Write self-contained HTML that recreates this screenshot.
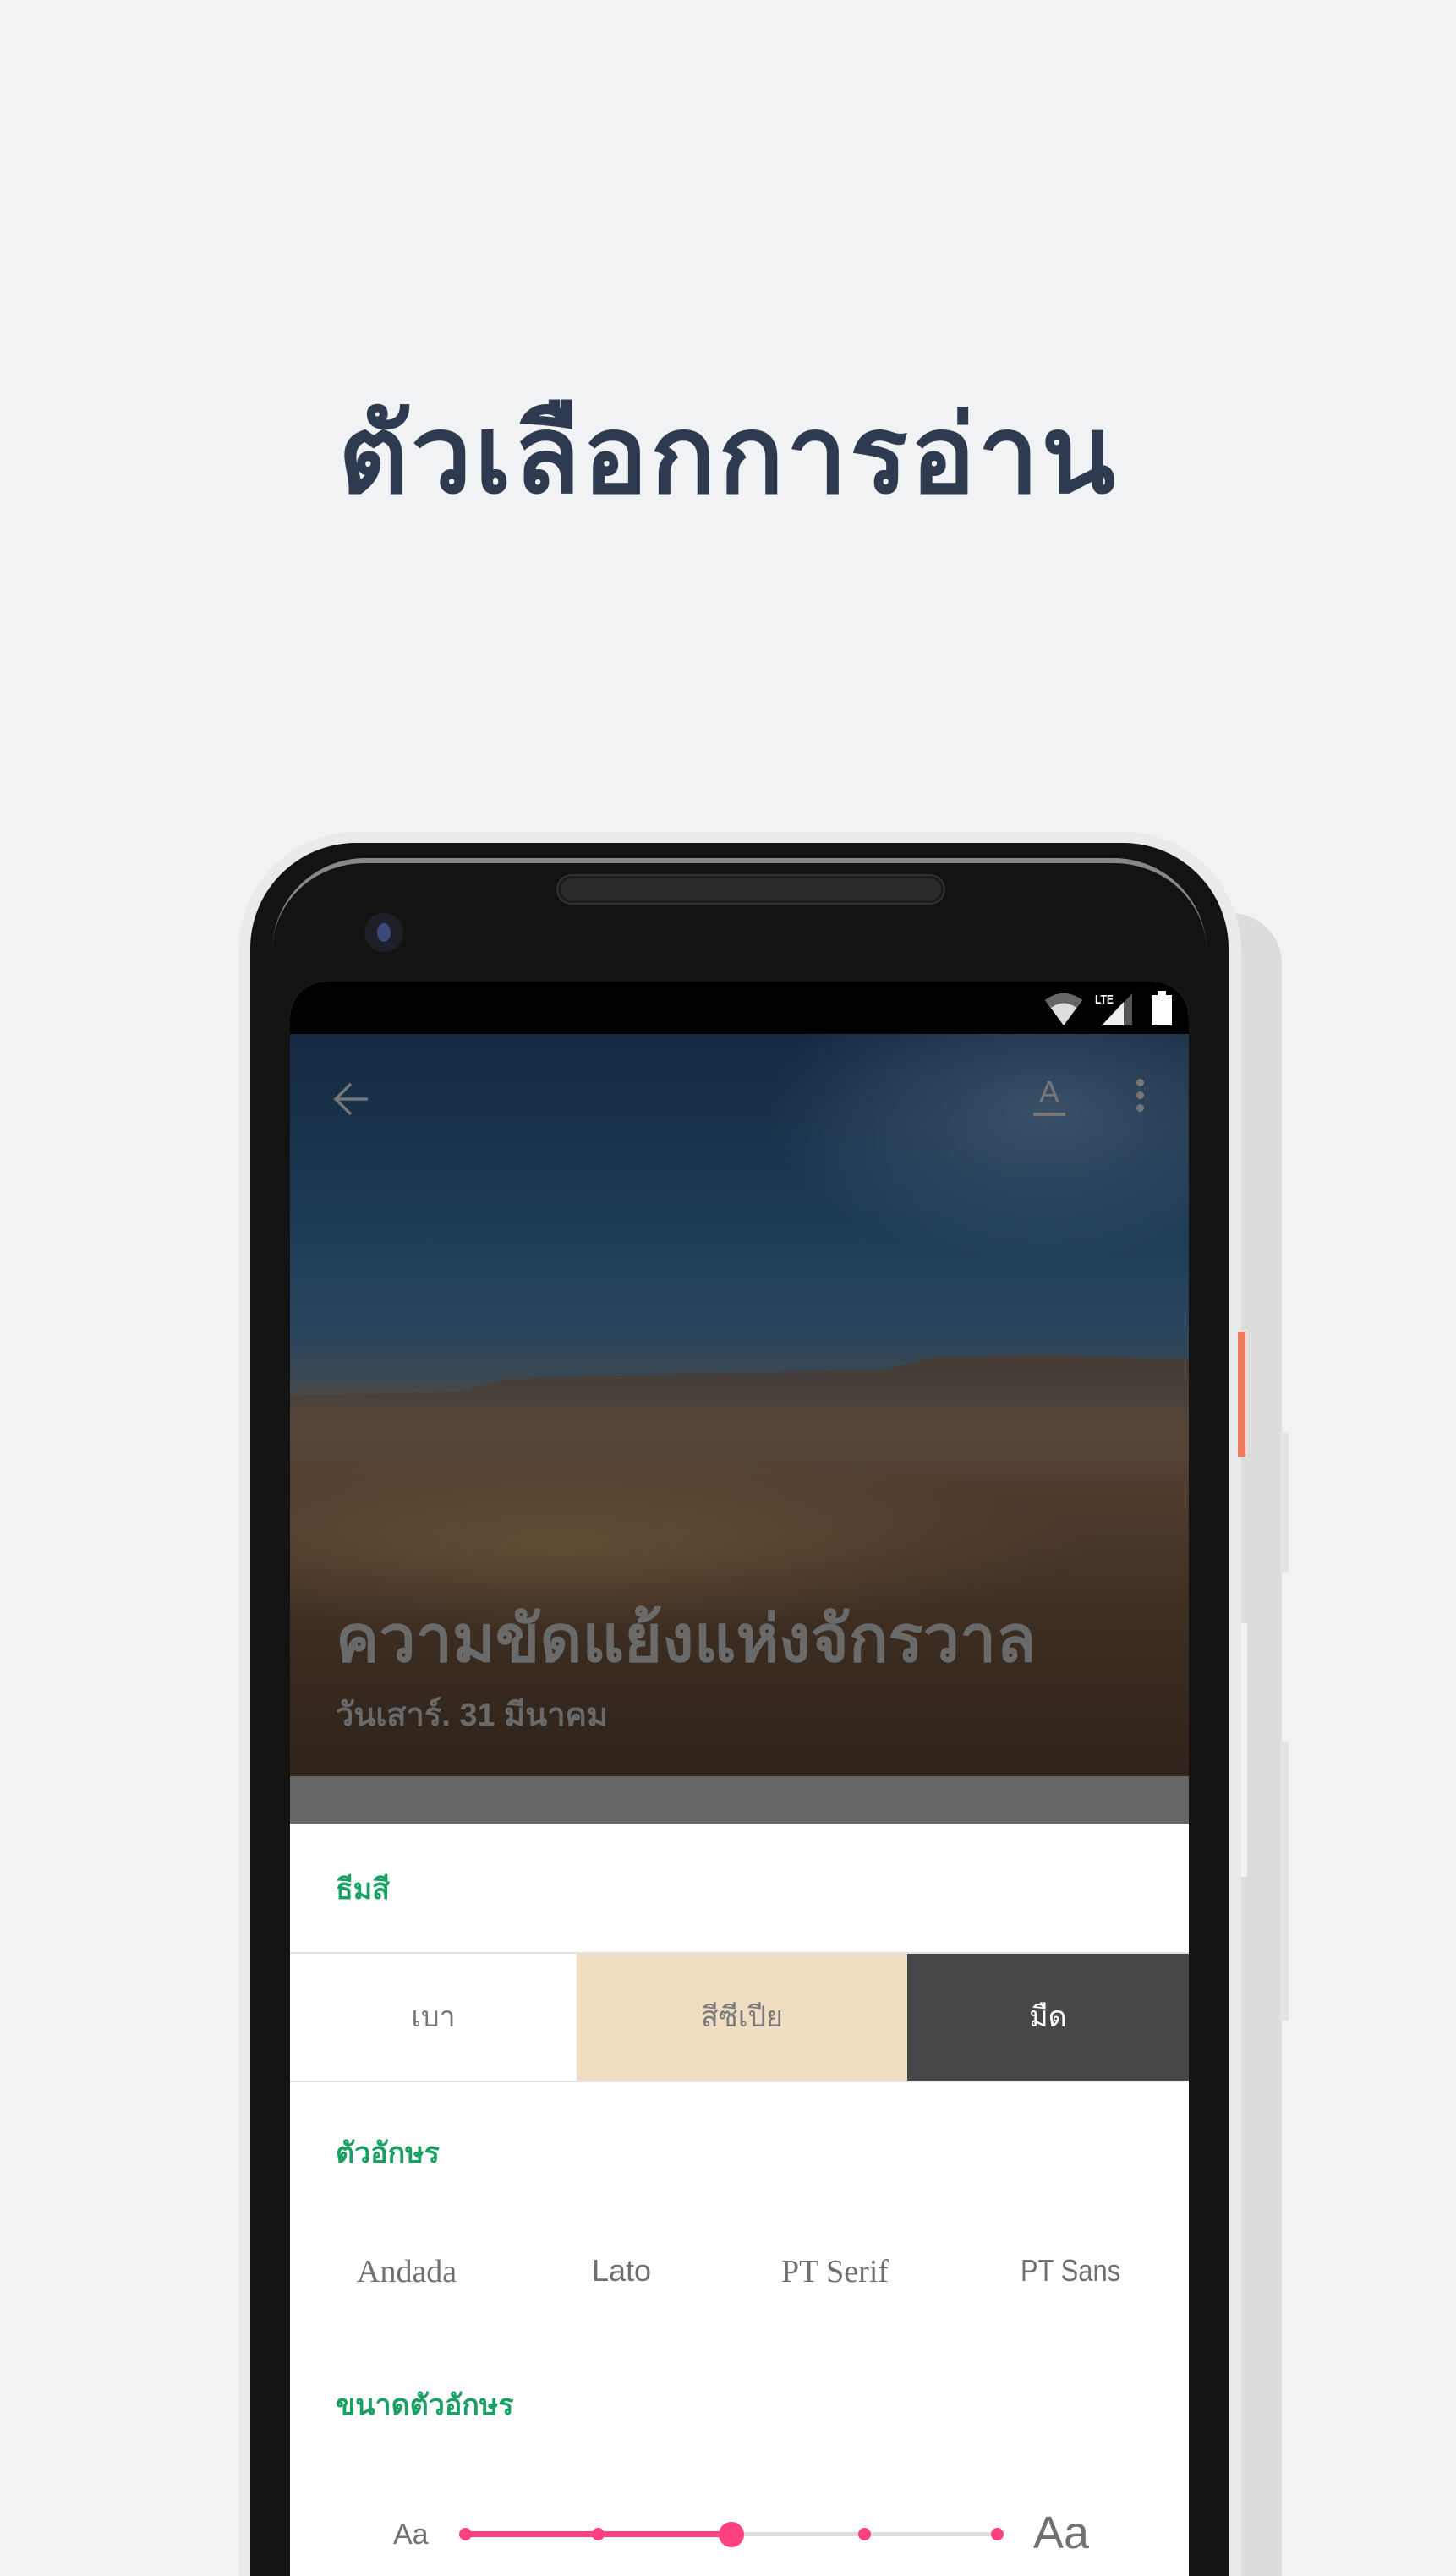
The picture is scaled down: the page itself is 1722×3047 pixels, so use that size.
<!DOCTYPE html>
<html><head><meta charset="utf-8"><style>
*{margin:0;padding:0;box-sizing:border-box}
html,body{width:1722px;height:3047px;overflow:hidden}
body{background:#f0f2f4;position:relative;font-family:"Liberation Sans",sans-serif}
.abs{position:absolute}
h1{position:absolute;left:0;width:1722px;top:436px;text-align:center;font-size:128px;font-weight:bold;color:#2d3a50;letter-spacing:3px;white-space:nowrap}
.g{color:#1aa062;font-weight:bold;font-size:34px}
</style></head><body>
<h1>ตัวเลือกการอ่าน</h1>
<div class="abs" style="left:1400px;top:1080px;width:116px;height:1967px;background:#dcdcdc;border-radius:0 60px 0 0"></div>
<div class="abs" style="left:1514px;top:1695px;width:10px;height:165px;background:#e4e4e4"></div>
<div class="abs" style="left:1514px;top:2060px;width:10px;height:330px;background:#e4e4e4"></div>
<div class="abs" style="left:1465px;top:1920px;width:10px;height:300px;background:#f4f4f4"></div>
<div class="abs" style="left:282px;top:984px;width:1186px;height:2063px;background:#e9eaeb;border-radius:140px 140px 0 0"></div>
<div class="abs" style="left:1464px;top:1575px;width:9px;height:148px;background:#f07a5e"></div>
<div class="abs" style="left:296px;top:997px;width:1157px;height:2050px;background:#131313;border-radius:125px 125px 0 0"></div>
<div class="abs" style="left:322px;top:1015px;width:1105px;height:200px;border-top:6px solid #888;border-radius:110px 110px 0 0"></div>
<div class="abs" style="left:322px;top:1022px;width:1105px;height:200px;border-top:4px solid #131313;border-radius:110px 110px 0 0"></div>
<div class="abs" style="left:660px;top:1036px;width:456px;height:32px;background:#2a2a2a;border:3px solid #1c1c1c;border-radius:16px;box-shadow:0 0 0 2px #333"></div>
<div class="abs" style="left:431px;top:1080px;width:46px;height:46px;border-radius:50%;background:#1d2028"></div>
<div class="abs" style="left:446px;top:1092px;width:16px;height:22px;border-radius:50%;background:#3a4a7a"></div>
<div class="abs" style="left:343px;top:1161px;width:1063px;height:1886px;background:#fff;border-radius:42px 42px 0 0;overflow:hidden">
 <div class="abs" style="left:0;top:0;width:1063px;height:62px;background:#000"></div>
 <svg class="abs" style="left:890px;top:10px" width="160" height="44" viewBox="0 0 160 44">
  <path d="M3 12 Q25 -4 47 12 L25 42 Z" fill="#ddd"/><path d="M3 12 Q25 -4 47 12 L40 21 Q25 10 10 21Z" fill="#666"/>
  <text x="62" y="16" font-size="15" fill="#fff" font-family="Liberation Sans" font-weight="bold" textLength="22" lengthAdjust="spacingAndGlyphs">LTE</text>
  <path d="M70 42 L106 42 L106 4 Z" fill="#555"/><path d="M70 42 L96 42 L96 14 Z" fill="#eee"/>
  <rect x="129" y="6" width="24" height="36" fill="#fff"/><rect x="136" y="1" width="10" height="6" fill="#fff"/>
 </svg>
 <div class="abs" style="left:0;top:62px;width:1063px;height:878px;background:linear-gradient(180deg,#142a40 0%,#1d3a55 25%,#2a465e 40%,#3a4752 46%,#5a4a3c 52%,#4e3b2c 62%,#3e2e22 78%,#2e231b 100%)"></div>
 <div class="abs" style="left:500px;top:62px;width:563px;height:300px;background:radial-gradient(ellipse at 70% 30%,rgba(120,140,160,.35),rgba(0,0,0,0) 60%)"></div>
 <svg class="abs" style="left:0;top:440px" width="1063" height="120" viewBox="0 0 1063 120"><defs><linearGradient id="r" x1="0" y1="0" x2="0" y2="1"><stop offset="0" stop-color="#4a3a2e" stop-opacity=".9"/><stop offset="1" stop-color="#4a3a2e" stop-opacity="0"/></linearGradient></defs><path d="M0 50 L200 45 L260 30 L420 25 L560 22 L700 20 L760 5 L900 2 L1063 8 L1063 120 L0 120Z" fill="url(#r)"/></svg>
 <div class="abs" style="left:0;top:540px;width:1063px;height:250px;background:radial-gradient(ellipse at 30% 50%,rgba(130,105,70,.45),rgba(0,0,0,0) 60%)"></div>
 <svg class="abs" style="left:50px;top:116px" width="46" height="46" viewBox="0 0 46 46"><path d="M42 23H6M22 5L4 23 22 41" stroke="#777" stroke-width="3.5" fill="none"/></svg>
 <div class="abs" style="left:879px;top:110px;width:38px;font:36px 'Liberation Sans';color:#777;text-align:center">A</div>
 <div class="abs" style="left:879px;top:155px;width:38px;height:4px;background:#777"></div>
 <div class="abs" style="left:1001px;top:115px;width:9px;height:9px;border-radius:50%;background:#777;box-shadow:0 15px 0 #777,0 30px 0 #777"></div>
 <div class="abs" style="left:54px;top:716px;font-size:77px;font-weight:bold;color:#6a6a6a;white-space:nowrap">ความขัดแย้งแห่งจักรวาล</div>
 <div class="abs" style="left:54px;top:836px;font-size:38px;font-weight:bold;color:#6a6a6a;white-space:nowrap">วันเสาร์. 31 มีนาคม</div>
 <div class="abs" style="left:0;top:940px;width:1063px;height:56px;background:#666"></div>
 <div class="abs g" style="left:54px;top:1046px">ธีมสี</div>
 <div class="abs" style="left:0;top:1148px;width:1063px;height:2px;background:#e2e2e2"></div>
 <div class="abs" style="left:0;top:1150px;width:339px;height:151px;text-align:center;line-height:151px;font-size:34px;color:#777">เบา</div>
 <div class="abs" style="left:339px;top:1150px;width:391px;height:151px;background:#f0dec3;text-align:center;line-height:151px;font-size:34px;color:#7a7a7a">สีซีเปีย</div>
 <div class="abs" style="left:730px;top:1150px;width:333px;height:151px;background:#474747;text-align:center;line-height:151px;font-size:34px;color:#fff">มืด</div>
 <div class="abs" style="left:0;top:1300px;width:1063px;height:2px;background:#e2e2e2"></div>
 <div class="abs g" style="left:54px;top:1358px">ตัวอักษร</div>
 <div class="abs" style="left:79px;top:1504px;font:38px 'Liberation Serif';color:#707070">Andada</div>
 <div class="abs" style="left:357px;top:1504px;font:36px 'Liberation Sans';color:#707070">Lato</div>
 <div class="abs" style="left:581px;top:1504px;font:38px 'Liberation Serif';color:#707070">PT Serif</div>
 <div class="abs" style="left:864px;top:1504px;font:36px 'Liberation Sans';color:#707070;transform:scaleX(0.86);transform-origin:0 0">PT Sans</div>
 <div class="abs g" style="left:54px;top:1656px">ขนาดตัวอักษร</div>
 <div class="abs" style="left:122px;top:1818px;font:34px 'Liberation Sans';color:#707070">Aa</div>
 <div class="abs" style="left:879px;top:1804px;font:54px 'Liberation Sans';color:#707070">Aa</div>
 <div class="abs" style="left:207px;top:1834px;width:629px;height:5px;background:#ddd"></div>
 <div class="abs" style="left:207px;top:1833px;width:315px;height:7px;background:#ff4081"></div>
 <div class="abs" style="left:200px;top:1829px;width:15px;height:15px;border-radius:50%;background:#ff4081"></div>
 <div class="abs" style="left:357px;top:1829px;width:15px;height:15px;border-radius:50%;background:#ff4081"></div>
 <div class="abs" style="left:507px;top:1822px;width:30px;height:30px;border-radius:50%;background:#ff4081"></div>
 <div class="abs" style="left:672px;top:1829px;width:15px;height:15px;border-radius:50%;background:#ff4081"></div>
 <div class="abs" style="left:829px;top:1829px;width:15px;height:15px;border-radius:50%;background:#ff4081"></div>
</div>
</body></html>
